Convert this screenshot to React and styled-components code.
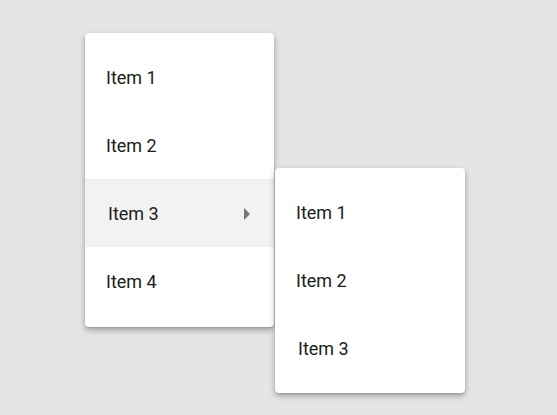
import React from 'react';
import styled, { createGlobalStyle } from 'styled-components';

const GlobalStyle = createGlobalStyle`
  html, body {
    margin: 0;
    padding: 0;
    background: #e5e5e5;
    font-family: Roboto, "Noto Sans", sans-serif;
  }
`;

const Page = styled.div`
  width: 557px;
  height: 415px;
  padding: 33px 0 0 85px;
  box-sizing: border-box;
`;

const Menu = styled.ul`
  list-style: none;
  margin: 0;
  padding: 10px 0 12px;
  width: 189px;
  background: #fff;
  border-radius: 4px;
  box-shadow: 0 3px 6px rgba(0, 0, 0, 0.3), 0 1px 2px rgba(0, 0, 0, 0.12);
`;

const SubMenu = styled(Menu)`
  position: absolute;
  left: 100%;
  top: -12px;
  margin-left: 1px;
  width: 190px;
  padding: 10px 0 11px;
`;

const Item = styled.li`
  position: relative;
  height: 68px;
  display: flex;
  align-items: center;
  justify-content: space-between;
  padding: 0 24px 0 ${props => props.$indent || 21}px;
  font-size: 18px;
  color: #1c1c1c;
  background: ${props => (props.$active ? '#f2f2f2' : 'transparent')};
  border-top: ${props => (props.$active ? '1px solid #ebebeb' : 'none')};
  box-sizing: border-box;
`;

const Arrow = styled.span`
  width: 0;
  height: 0;
  border-top: 6px solid transparent;
  border-bottom: 6px solid transparent;
  border-left: 6px solid #757575;
`;

export default function App() {
  return (
    <Page>
      <GlobalStyle />
      <Menu>
        <Item>Item 1</Item>
        <Item>Item 2</Item>
        <Item $active $indent={23}>
          Item 3
          <Arrow />
          <SubMenu>
            <Item>Item 1</Item>
            <Item>Item 2</Item>
            <Item $indent={23}>Item 3</Item>
          </SubMenu>
        </Item>
        <Item>Item 4</Item>
      </Menu>
    </Page>
  );
}
